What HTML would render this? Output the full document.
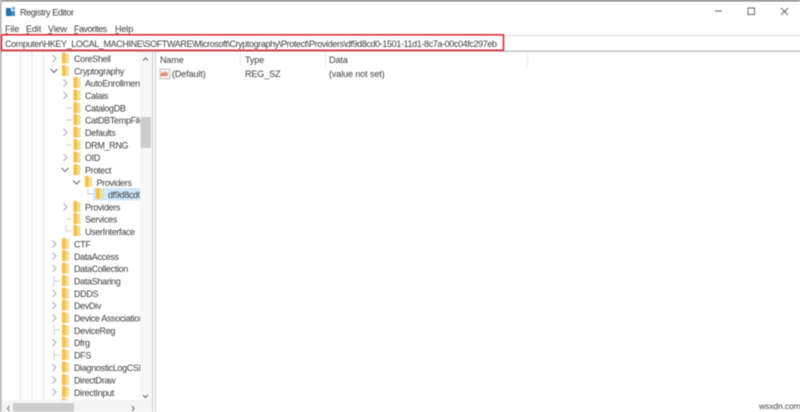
<!DOCTYPE html>
<html><head><meta charset="utf-8"><style>
html,body{margin:0;padding:0;width:800px;height:412px;overflow:hidden;background:#fff}
svg{display:block;filter:blur(.4px)}
text{font-family:"Liberation Sans",sans-serif;font-size:9px;letter-spacing:-.1px;fill:#3c3c3c}
g.t text{letter-spacing:-.33px}
</style></head><body>
<svg width="800" height="412" viewBox="0 0 800 412" xmlns="http://www.w3.org/2000/svg">
<defs>
<g id="fo"><rect x="0" y="-5" width="7" height="10" fill="#fbdc86"/><rect x="0" y="-6" width="3.5" height="11" fill="#f0c050"/></g>
<path id="cr" d="M-1.500-3.500 2 0-1.500 3.500" fill="none" stroke="#aaa" stroke-width="1"/>
<path id="cd" d="M-3.500-1.500 0 2 3.500-1.500" fill="none" stroke="#666" stroke-width="1"/>
<clipPath id="tc"><rect x="0" y="52" width="140" height="348"/></clipPath>
</defs>
<rect width="800" height="412" fill="#fff"/>
<rect width="800" height="1.500" fill="#7d7d7d"/>
<rect width="1.500" height="412" fill="#a8a8a8"/>
<!-- title -->
<rect x="6" y="8" width="5" height="8" fill="#2a6f9e"/><rect x="11" y="11" width="4" height="5" fill="#3d8fc4"/><rect x="12" y="7" width="3" height="3" fill="#66b2dc"/>
<text x="20" y="15.500" textLength="54" style="font-size:9px;letter-spacing:0">Registry Editor</text>
<path d="M715 11h7" stroke="#777" stroke-width="1.200"/>
<rect x="748" y="8" width="6.500" height="6.500" fill="none" stroke="#666"/>
<path d="M781 8l7 7M788 8l-7 7" stroke="#666" fill="none"/>
<!-- menu -->
<text x="5" y="32">File</text><text x="26" y="32">Edit</text><text x="48" y="32">View</text><text x="74" y="32" textLength="33">Favorites</text><text x="115" y="32">Help</text>
<path d="M5 33.500h3M26 33.500h3M48 33.500h4M74 33.500h4M115 33.500h4" stroke="#555" stroke-width=".7"/>
<!-- address -->
<rect x="0" y="35" width="800" height="1" fill="#d8d8d8"/>
<rect x="0" y="50.500" width="800" height="1.200" fill="#b0b0b0"/>
<rect x="1.500" y="34.800" width="502" height="15.500" fill="#fff" stroke="#e02030" stroke-width="1.500"/>
<text x="5" y="47" textLength="492" lengthAdjust="spacing" style="font-size:9px;letter-spacing:0" fill="#222">Computer\HKEY_LOCAL_MACHINE\SOFTWARE\Microsoft\Cryptography\Protect\Providers\df9d8cd0-1501-11d1-8c7a-00c04fc297eb</text>
<!-- guides -->
<path d="M20.500 52V400M32 52V400M43.500 52V400" stroke="#e4e4e4"/>
<path d="M66 108h6M66 120h6M66 145h6M66 219h6M66 231h6M66 225v6M88 188v6h5M54 281h6M54 330h6M54 355h6M54 276v10M54 325v10M54 350v10" stroke="#d0d0d0" fill="none"/>
<!-- selection -->
<rect x="93" y="188" width="47" height="12.500" fill="#cfe8fb"/>
<!-- tree -->
<g clip-path="url(#tc)" class="t">
<use href="#cr" x="54" y="58.500"/><use href="#fo" x="62" y="58.500"/><text x="74" y="62">CoreShell</text>
<use href="#cd" x="54" y="70.500"/><use href="#fo" x="62" y="71"/><text x="74" y="74.500">Cryptography</text>
<use href="#cr" x="65" y="83"/><use href="#fo" x="73.500" y="83"/><text x="85" y="86.500">AutoEnrollment</text>
<use href="#cr" x="65" y="95.500"/><use href="#fo" x="73.500" y="95.500"/><text x="85" y="99">Calais</text>
<use href="#fo" x="73.500" y="108"/><text x="85" y="111.500">CatalogDB</text>
<use href="#fo" x="73.500" y="120"/><text x="85" y="123.500">CatDBTempFiles</text>
<use href="#cr" x="65" y="132.500"/><use href="#fo" x="73.500" y="132.500"/><text x="85" y="136">Defaults</text>
<use href="#fo" x="73.500" y="145"/><text x="85" y="148.500">DRM_RNG</text>
<use href="#cr" x="65" y="157.500"/><use href="#fo" x="73.500" y="157.500"/><text x="85" y="161">OID</text>
<use href="#cd" x="65" y="169.500"/><use href="#fo" x="73.500" y="170"/><text x="85" y="173.500">Protect</text>
<use href="#cd" x="76.500" y="182"/><use href="#fo" x="85" y="182"/><text x="96.500" y="186">Providers</text>
<use href="#fo" x="96" y="194"/><text x="108" y="198">df9d8cd0</text>
<use href="#cr" x="65" y="207"/><use href="#fo" x="73.500" y="207"/><text x="85" y="210.500">Providers</text>
<use href="#fo" x="73.500" y="219"/><text x="85" y="222.500">Services</text>
<use href="#fo" x="73.500" y="231"/><text x="85" y="235">UserInterface</text>
<use href="#cr" x="54" y="244"/><use href="#fo" x="62" y="244"/><text x="74" y="247.500">CTF</text>
<use href="#cr" x="54" y="256"/><use href="#fo" x="62" y="256"/><text x="74" y="260">DataAccess</text>
<use href="#cr" x="54" y="268.500"/><use href="#fo" x="62" y="268.500"/><text x="74" y="272">DataCollection</text>
<use href="#fo" x="62" y="281"/><text x="74" y="284.500">DataSharing</text>
<use href="#cr" x="54" y="293.500"/><use href="#fo" x="62" y="293.500"/><text x="74" y="297">DDDS</text>
<use href="#cr" x="54" y="305.500"/><use href="#fo" x="62" y="305.500"/><text x="74" y="309">DevDiv</text>
<use href="#cr" x="54" y="318"/><use href="#fo" x="62" y="318"/><text x="74" y="321.500">Device Association</text>
<use href="#fo" x="62" y="330.500"/><text x="74" y="334">DeviceReg</text>
<use href="#cr" x="54" y="342.500"/><use href="#fo" x="62" y="342.500"/><text x="74" y="346">Dfrg</text>
<use href="#fo" x="62" y="355"/><text x="74" y="358.500">DFS</text>
<use href="#cr" x="54" y="367.500"/><use href="#fo" x="62" y="367.500"/><text x="74" y="371">DiagnosticLogCSP</text>
<use href="#cr" x="54" y="380"/><use href="#fo" x="62" y="380"/><text x="74" y="383.500">DirectDraw</text>
<use href="#cr" x="54" y="392"/><use href="#fo" x="62" y="392"/><text x="74" y="396">DirectInput</text>
<use href="#fo" x="62" y="404"/><text x="74" y="408">DirectMusic</text>
</g>
<!-- v scrollbar -->
<rect x="140" y="52" width="11" height="348" fill="#f7f7f7"/>
<rect x="140.500" y="117" width="10.500" height="31" fill="#cdcdcd"/>
<path d="M143 60.500l2.500-2.500 2.500 2.500M143 395l2.500 2.500 2.500-2.500" fill="none" stroke="#666" stroke-width="1"/>
<!-- h scrollbar -->
<rect x="2" y="400" width="149" height="12" fill="#f5f5f5"/>
<rect x="13" y="403" width="61" height="9" fill="#cdcdcd"/>
<path d="M9.500 406l-2 2.500 2 2.500M132 406l2 2.500-2 2.500" fill="none" stroke="#666" stroke-width="1"/>
<!-- divider -->
<rect x="152" y="52" width="1" height="360" fill="#c4c4c4"/>
<rect x="155" y="52" width="1" height="360" fill="#c8c8c8"/>
<!-- list -->
<text x="160" y="63">Name</text><text x="245" y="63">Type</text><text x="329" y="63">Data</text>
<path d="M240.500 53v13M325.500 53v13M527.500 53v13" stroke="#e8e8e8"/>
<rect x="160" y="69" width="10" height="10" fill="#fbf1ec" stroke="#aaa" stroke-width=".6"/>
<text x="160.500" y="76" style="font-size:6.500px;font-weight:bold;fill:#c8442c">ab</text>
<text x="172" y="77">(Default)</text><text x="245" y="77">REG_SZ</text><text x="329" y="77">(value not set)</text>
<text x="759" y="409" style="font-size:8.500px;fill:#444">wsxdn.com</text>
</svg>
</body></html>
